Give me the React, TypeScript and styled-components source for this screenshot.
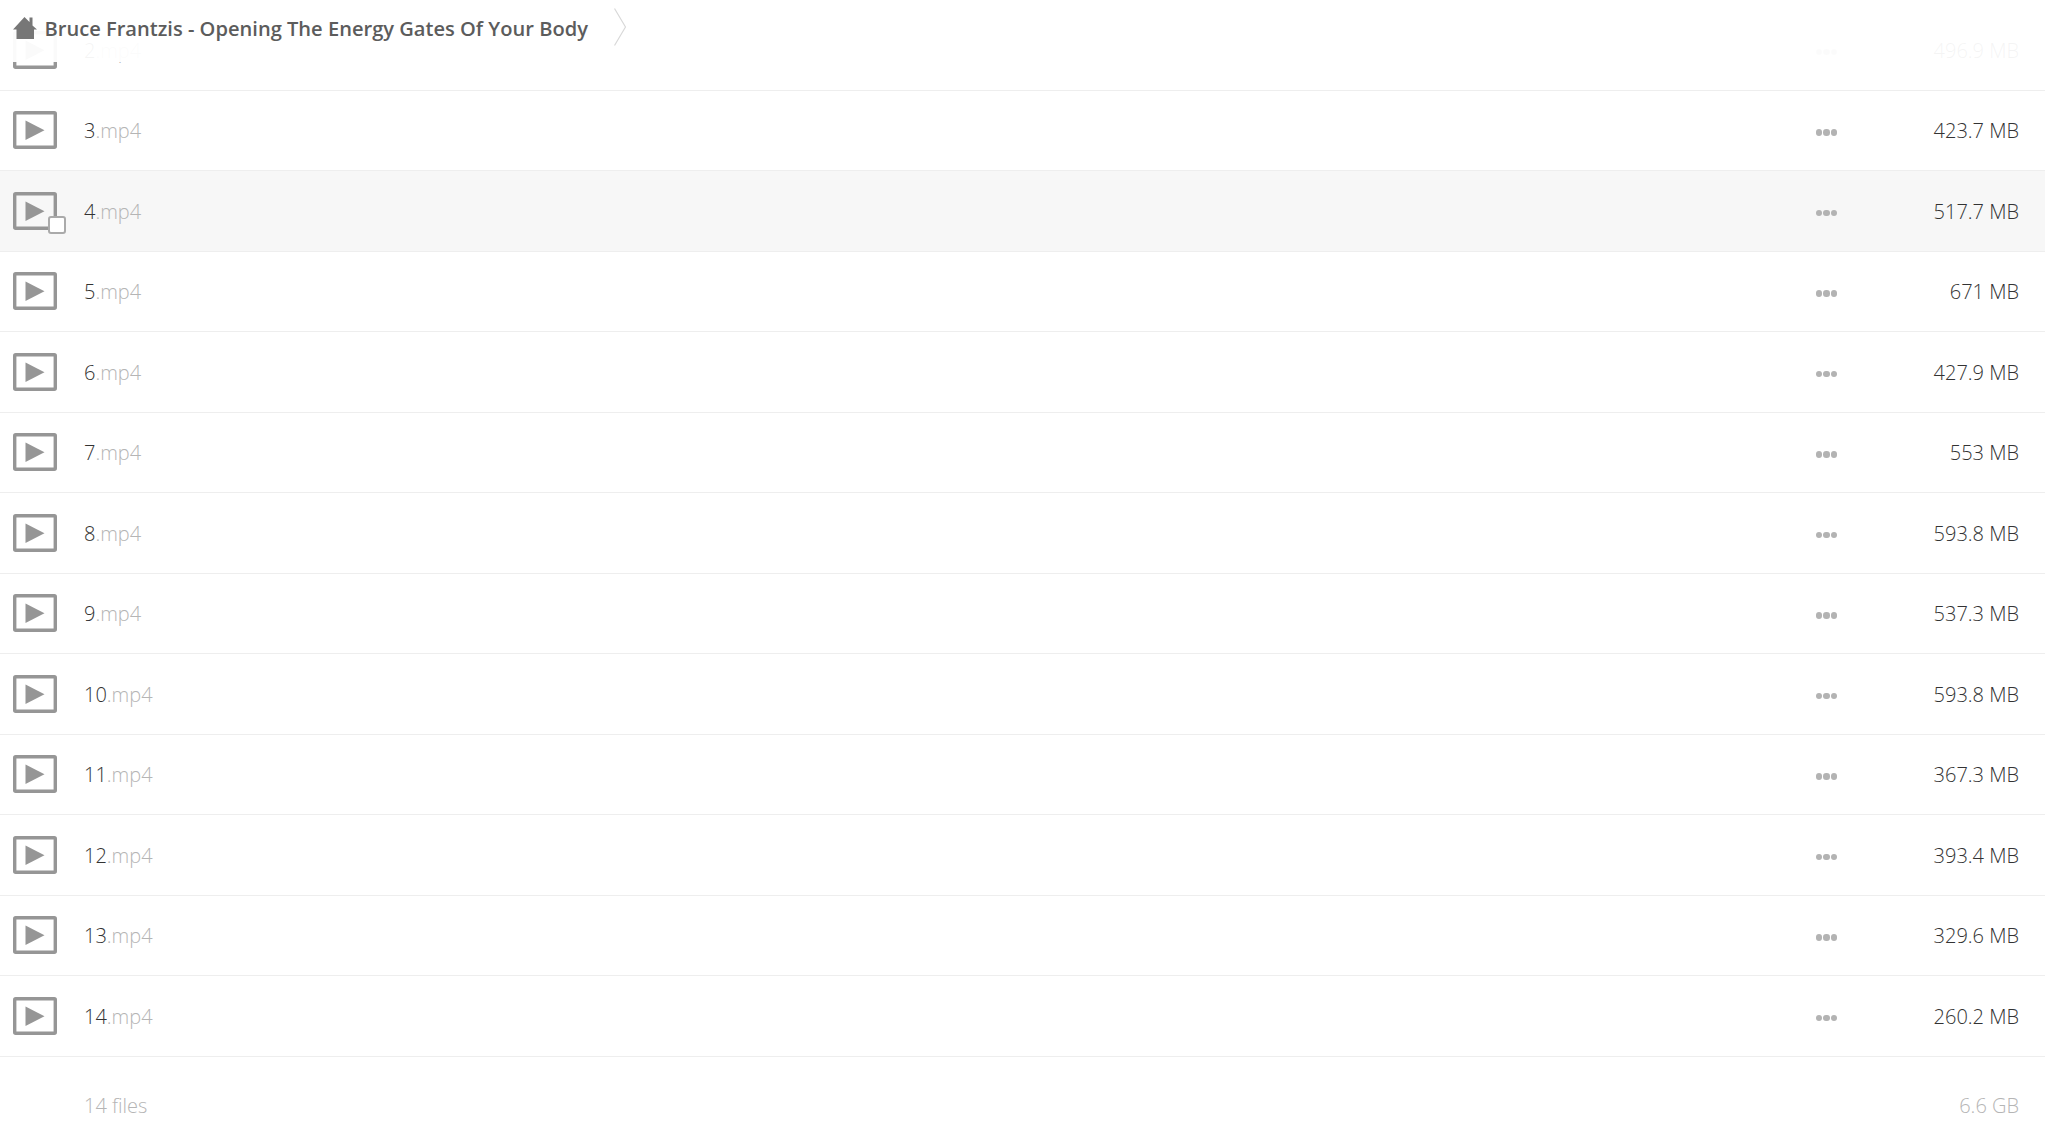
import styled, { createGlobalStyle } from 'styled-components';

const GlobalStyle = createGlobalStyle`
  html, body {
    margin: 0;
    padding: 0;
    background: #fff;
    height: 100%;
  }
  body {
    font-family: "Open Sans", "Liberation Sans", sans-serif;
    overflow: hidden;
  }
`;

const Page = styled.div`
  position: relative;
  width: 2045px;
  height: 1136px;
  overflow: hidden;
  background: #fff;
`;

const Controls = styled.div`
  position: absolute;
  top: 0;
  left: 0;
  right: 0;
  height: 62px;
  display: flex;
  align-items: flex-start;
  padding-left: 13px;
  background: rgba(255, 255, 255, 0.95);
`;

const HomeLink = styled.a`
  display: flex;
  margin-top: 17px;
  margin-right: 7.5px;
`;

const Crumb = styled.span`
  margin-top: 14px;
  font-size: 20.1px;
  line-height: 30px;
  font-weight: 600;
  color: #5c5c5c;
  white-space: nowrap;
`;

const CrumbChevron = styled.svg`
  margin-top: 8px;
  margin-left: 26px;
`;

const FileList = styled.div`
  padding-top: 10px;
`;

const Row = styled.div<{ $hover?: boolean }>`
  display: flex;
  align-items: center;
  height: 80.5px;
  box-sizing: border-box;
  border-bottom: 1.5px solid #eee;
  background: ${({ $hover }) => ($hover ? '#f7f7f7' : '#fff')};
`;

const Thumb = styled.div`
  position: relative;
  display: flex;
  flex: none;
  width: 44px;
  height: 38px;
  margin-left: 13px;
  margin-right: 27px;
`;

const Checkbox = styled.span`
  position: absolute;
  right: -9px;
  bottom: -4px;
  width: 18px;
  height: 18px;
  box-sizing: border-box;
  border: 2px solid #aaa;
  border-radius: 3px;
  background: #fff;
`;

const Name = styled.div`
  flex: 1;
  margin-top: 1px;
  font-size: 20px;
  font-weight: 300;
  color: #333;
`;

const Ext = styled.span`
  color: #b5b5b5;
`;

const Actions = styled.div`
  display: flex;
  gap: 1px;
  margin-top: 4px;
  margin-right: 53px;
`;

const Dot = styled.span`
  width: 6.5px;
  height: 6.5px;
  border-radius: 50%;
  background: #b3b3b3;
`;

const Size = styled.div`
  width: 155px;
  margin-top: 1px;
  padding-right: 26px;
  box-sizing: border-box;
  text-align: right;
  font-size: 20px;
  font-weight: 300;
  color: #333;
`;

const Summary = styled.div`
  display: flex;
  align-items: center;
  height: 80px;
  padding-top: 9px;
  padding-left: 84px;
  font-size: 20px;
  font-weight: 300;
  color: #b5b5b5;
`;

const SummaryCount = styled.div`
  flex: 1;
`;

const SummarySize = styled.div`
  padding-right: 26px;
`;

const files = [
  { name: '2', size: '496.9 MB' },
  { name: '3', size: '423.7 MB' },
  { name: '4', size: '517.7 MB', hover: true },
  { name: '5', size: '671 MB' },
  { name: '6', size: '427.9 MB' },
  { name: '7', size: '553 MB' },
  { name: '8', size: '593.8 MB' },
  { name: '9', size: '537.3 MB' },
  { name: '10', size: '593.8 MB' },
  { name: '11', size: '367.3 MB' },
  { name: '12', size: '393.4 MB' },
  { name: '13', size: '329.6 MB' },
  { name: '14', size: '260.2 MB' },
];

const VideoIcon = () => (
  <svg width="44" height="38" viewBox="0 0 44 38">
    <rect x="1.700" y="1.700" width="40.600" height="34.600" rx="1" fill="none" stroke="#969696" strokeWidth="3.400" />
    <path d="M12.500 9.500v19.500l19-9.750z" fill="#969696" />
  </svg>
);

export default function App() {
  return (
    <Page>
      <GlobalStyle />
      <FileList>
        {files.map((file) => (
          <Row key={file.name} $hover={file.hover}>
            <Thumb>
              <VideoIcon />
              {file.hover && <Checkbox />}
            </Thumb>
            <Name>
              {file.name}
              <Ext>.mp4</Ext>
            </Name>
            <Actions>
              <Dot />
              <Dot />
              <Dot />
            </Actions>
            <Size>{file.size}</Size>
          </Row>
        ))}
      </FileList>
      <Summary>
        <SummaryCount>14 files</SummaryCount>
        <SummarySize>6.6 GB</SummarySize>
      </Summary>
      <Controls>
        <HomeLink>
          <svg width="24" height="22" viewBox="0 0 24 22">
            <path d="M11.500 0l5 5V0.500h3v8l4.500 4h-3V22H3.500V12.500H0z" fill="#777" />
          </svg>
        </HomeLink>
        <Crumb>Bruce Frantzis - Opening The Energy Gates Of Your Body</Crumb>
        <CrumbChevron width="12" height="38" viewBox="0 0 12 38">
          <path d="M0.500 0.500L11.500 19L0.500 37.500" fill="none" stroke="#d8d8d8" strokeWidth="1.200" />
        </CrumbChevron>
      </Controls>
    </Page>
  );
}
